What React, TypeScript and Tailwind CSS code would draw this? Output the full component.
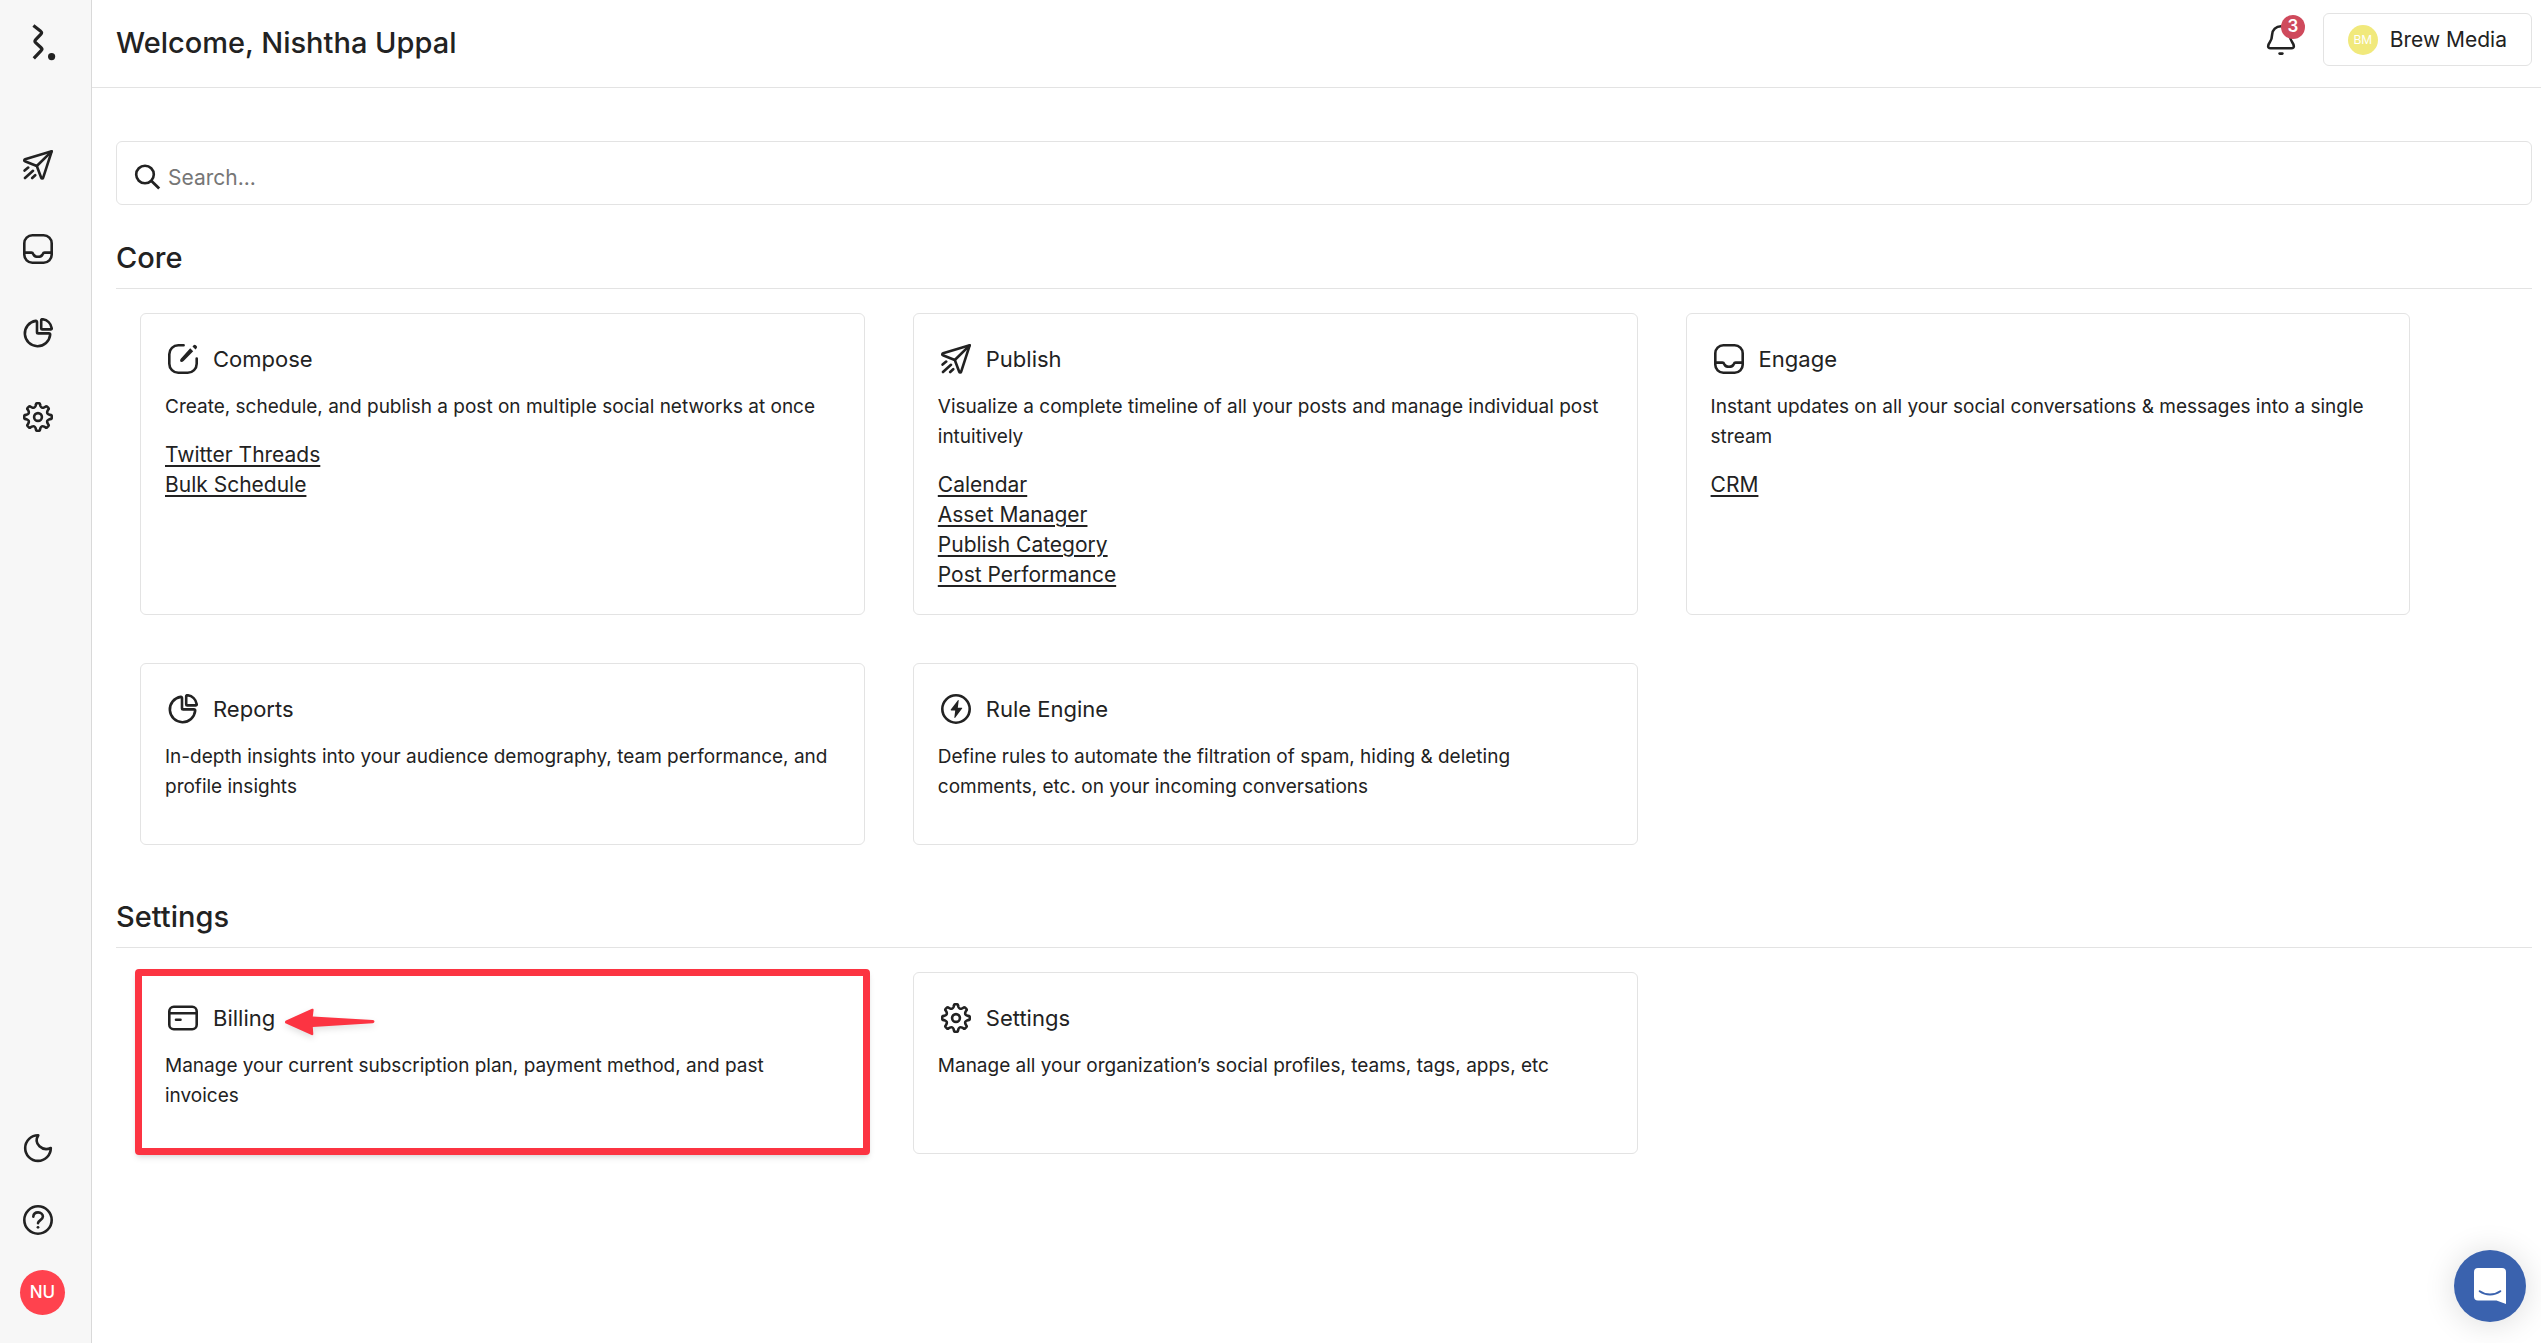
import type { ReactNode } from "react";

type IconProps = { children: ReactNode };

function Icon({ children }: IconProps) {
  return (
    <svg
      viewBox="0 0 30 30"
      className="size-[30px] shrink-0"
      fill="none"
      stroke="currentColor"
      strokeWidth="2.6"
      strokeLinecap="round"
      strokeLinejoin="round"
      aria-hidden="true"
    >
      {children}
    </svg>
  );
}

const PlaneIcon = () => (
  <Icon>
    <path d="M28.7 1.3 2.1 9.300c-1 .3-1.100 1.400-.2 1.900L13.8 16l4.400 11.800c.4 1 1.600 1 1.900 0Z" />
    <path d="M28.400 1.600 13.800 16" />
    <path d="m1.600 20.600 3.600-3M2 28l8-7.200M9.200 28l3-2.800" />
  </Icon>
);

const InboxIcon = () => (
  <Icon>
    <rect x="1.300" y="1.300" width="27.400" height="27.400" rx="8" />
    <path d="M1.600 18.600h6.800c1.100 0 1.600.8 2 1.700.8 1.600 2.300 2.500 4.600 2.500s3.800-.9 4.600-2.500c.4-.9.900-1.700 2-1.700h6.800" />
  </Icon>
);

const PieIcon = () => (
  <Icon>
    <path d="M12.800 2.900A12.700 12.700 0 1 0 27.200 16.700c0-.8-.5-1.300-1.300-1.300H15.200c-.8 0-1.200-.4-1.200-1.200V4c0-.7-.5-1.200-1.200-1.100Z" />
    <path d="M18.200 2.200c0-.7.500-1.100 1.200-1 4.900.6 8.600 4.200 9.300 9 .1.700-.4 1.200-1 1.200h-8.500c-.6 0-1-.4-1-1Z" />
  </Icon>
);

function gearPath() {
  const at = (radius: number, degrees: number) => {
    const t = (degrees * Math.PI) / 180;
    return `${(15 + radius * Math.cos(t)).toFixed(2)} ${(15 + radius * Math.sin(t)).toFixed(2)}`;
  };
  let d = `M${at(11.4, -12)}`;
  for (let i = 0; i < 8; i++) {
    const a = i * 45;
    d += `L${at(12.6, a - 9.5)}Q${at(13.8, a - 8.5)} ${at(13.8, a - 4)}L${at(13.8, a + 4)}Q${at(13.8, a + 8.5)} ${at(12.6, a + 9.5)}`;
    d += `L${at(11.4, a + 12)}Q${at(9, a + 22.5)} ${at(11.4, a + 33)}`;
  }
  return `${d}Z`;
}

const GearIcon = () => (
  <Icon>
    <path d={gearPath()} />
    <circle cx="15" cy="15" r="3.9" />
  </Icon>
);

const ComposeIcon = () => (
  <Icon>
    <path d="M15.600 1.300H10.300a9 9 0 0 0-9 9v9.400a9 9 0 0 0 9 9h9.400a9 9 0 0 0 9-9v-5.200" />
    <path
      d="m22.200 4.300 3 3L15.600 17c-.6.600-1.300.9-2.200.9-.8 0-1.300-.5-1.300-1.200 0-.9.3-1.700.9-2.300ZM25.600 1.300a1.600 1.600 0 0 1 2.200 0l.8.8a1.600 1.600 0 0 1 0 2.200l-1.100 1.100-3-3Z"
      fill="currentColor"
      stroke="none"
    />
  </Icon>
);

const BoltIcon = () => (
  <Icon>
    <circle cx="15" cy="15" r="13.700" />
    <path
      d="M16.900 6.300 9.800 15.600c-.3.400-.1.800.4.800h4l-.8 6.900c-.1.800.4.900.8.400l6.900-9.200c.3-.4.1-.8-.4-.8h-3.900l.9-7.100c.1-.7-.4-.8-.8-.300Z"
      fill="currentColor"
      stroke="none"
    />
  </Icon>
);

const CardIcon = () => (
  <Icon>
    <rect x="1.300" y="3.800" width="27.400" height="22.400" rx="4.500" />
    <path d="M1.500 10.300h27M8 16.700h4.500" />
  </Icon>
);

const MoonIcon = () => (
  <Icon>
    <path d="M15.300 2.300A12.800 12.800 0 1 0 27.800 15c-8.300 3.800-17.800-4.200-12.500-12.700Z" />
  </Icon>
);

const HelpIcon = () => (
  <Icon>
    <circle cx="15" cy="15" r="13.700" />
    <path d="M10.300 11.700c.2-2.600 2.100-4.300 4.800-4.300 2.800 0 4.800 1.800 4.800 4.200 0 3.400-4.700 3.500-4.900 6.600" />
    <circle cx="15" cy="22.300" r="1.400" fill="currentColor" stroke="none" />
  </Icon>
);

const SearchIcon = () => (
  <Icon>
    <circle cx="11" cy="11.500" r="8.800" />
    <path d="m17.500 18 7.700 7.600" strokeWidth="2.800" strokeLinecap="butt" />
  </Icon>
);

const BellIcon = () => (
  <Icon>
    <path d="M15 1.300c-5 0-8.700 3.500-8.900 8.400-.1 3.300-.3 4.800-2.300 7.600-1.800 2.500-2.800 5.900.7 5.900h21c3.500 0 2.500-3.400.7-5.900-2-2.800-2.200-4.300-2.300-7.600C23.700 4.800 20 1.300 15 1.300Z" />
    <path d="M13.700 28.600h2.600" strokeWidth="2.800" />
  </Icon>
);

const LogoIcon = () => (
  <svg
    viewBox="0 0 30 40"
    className="h-10 w-[30px]"
    fill="none"
    stroke="currentColor"
    strokeWidth="3.200"
    strokeLinejoin="round"
    aria-hidden="true"
  >
    <path d="m4.400 2.600 7 5.500c1.600 1.300 1.600 1.900.3 3.300l-5 5.200c-1.300 1.400-1.300 1.900.2 3.300l5 4.600c1.500 1.400 1.500 1.900.2 3.200l-7.300 7.700" />
    <circle cx="22.600" cy="33.600" r="3.600" fill="currentColor" stroke="none" />
  </svg>
);

type Tile = {
  title: string;
  text: string;
  icon: ReactNode;
  links?: string[];
  marked?: boolean;
};

const core: Tile[] = [
  {
    title: "Compose",
    text: "Create, schedule, and publish a post on multiple social networks at once",
    icon: <ComposeIcon />,
    links: ["Twitter Threads", "Bulk Schedule"],
  },
  {
    title: "Publish",
    text: "Visualize a complete timeline of all your posts and manage individual post intuitively",
    icon: <PlaneIcon />,
    links: ["Calendar", "Asset Manager", "Publish Category", "Post Performance"],
  },
  {
    title: "Engage",
    text: "Instant updates on all your social conversations & messages into a single stream",
    icon: <InboxIcon />,
    links: ["CRM"],
  },
  {
    title: "Reports",
    text: "In-depth insights into your audience demography, team performance, and profile insights",
    icon: <PieIcon />,
  },
  {
    title: "Rule Engine",
    text: "Define rules to automate the filtration of spam, hiding & deleting comments, etc. on your incoming conversations",
    icon: <BoltIcon />,
  },
];

const settings: Tile[] = [
  {
    title: "Billing",
    text: "Manage your current subscription plan, payment method, and past invoices",
    icon: <CardIcon />,
    marked: true,
  },
  {
    title: "Settings",
    text: "Manage all your organization’s social profiles, teams, tags, apps, etc",
    icon: <GearIcon />,
  },
];

/** Red frame and arrow laid over a card to call it out. */
function Callout() {
  return (
    <div className="pointer-events-none" aria-hidden="true">
      <div className="absolute -inset-x-1.5 -top-1 -bottom-0.5 rounded border-[7px] border-[#fc3442] shadow-md" />
      <svg
        viewBox="0 0 90 28"
        className="absolute top-[35px] left-36 h-7 w-[90px] drop-shadow-md"
        fill="#fc3442"
      >
        <path d="M1 12.500 27 .8c1-.4 1.600.1 1.600 1.100l-.8 6.600 60 3.400c2.200.2 2.200 3.200 0 3.300l-60 3.800.5 7c0 1-.8 1.500-1.700 1L1 15.600c-1.400-.8-1.400-2.400 0-3.100Z" />
      </svg>
    </div>
  );
}

function TileCard({ title, text, icon, links = [], marked }: Tile) {
  return (
    <article className="relative m-6 min-h-[182px] w-[30%] rounded-md border border-[#e3e3e3] p-6">
      <div className="flex h-[42px] items-center gap-[15px] pl-[3px]">
        {icon}
        <h3 className="text-[22px]">{title}</h3>
      </div>
      <p className="mt-3 text-[19px] leading-[30px]">{text}</p>
      {links.length > 0 && (
        <ul className="mt-[18px] text-[21px] leading-[30px]">
          {links.map((link) => (
            <li key={link}>
              <a href="#" className="underline decoration-2 underline-offset-3">
                {link}
              </a>
            </li>
          ))}
        </ul>
      )}
      {marked && <Callout />}
    </article>
  );
}

function Section({ title, tiles }: { title: string; tiles: Tile[] }) {
  return (
    <section className="pt-[30px]">
      <h2 className="border-b border-[#e3e3e3] pb-3 text-[29px] leading-9 font-medium">{title}</h2>
      <div className="flex flex-wrap">
        {tiles.map((tile) => (
          <TileCard key={tile.title} {...tile} />
        ))}
      </div>
    </section>
  );
}

const nav = [
  { label: "Publish", icon: <PlaneIcon /> },
  { label: "Engage", icon: <InboxIcon /> },
  { label: "Reports", icon: <PieIcon /> },
  { label: "Settings", icon: <GearIcon /> },
];

export default function App() {
  return (
    <div className="flex min-h-screen bg-white font-['Inter',sans-serif] text-[#222222]">
      <aside className="sticky top-0 flex h-screen w-[92px] shrink-0 flex-col border-r border-[#d9d9d9] bg-[#f7f7f7] pb-7 pl-[23px]">
        <a href="#" aria-label="Home" className="mt-[23px] ml-1.5">
          <LogoIcon />
        </a>
        <nav className="mt-[87px] flex flex-col items-start gap-[54px]">
          {nav.map((item) => (
            <a key={item.label} href="#" aria-label={item.label}>
              {item.icon}
            </a>
          ))}
        </nav>
        <div className="mt-auto flex flex-col items-start gap-[42px]">
          <button type="button" aria-label="Dark mode">
            <MoonIcon />
          </button>
          <button type="button" aria-label="Help">
            <HelpIcon />
          </button>
          <button
            type="button"
            className="-mt-[7px] -ml-[3px] flex size-[45px] items-center justify-center rounded-full bg-[#ff424e] text-[17px] font-medium text-white"
          >
            NU
          </button>
        </div>
      </aside>

      <div className="min-w-0 flex-1">
        <header className="flex h-[88px] items-start justify-between border-b border-[#e3e3e3] pr-[9px] pl-6">
          <h1 className="mt-[25px] text-[29px] leading-9 font-medium">Welcome, Nishtha Uppal</h1>
          <div className="mt-[13px] flex items-center gap-[27px]">
            <button type="button" aria-label="Notifications" className="relative">
              <BellIcon />
              <span className="absolute -top-2.5 left-[15px] flex size-6 items-center justify-center rounded-full bg-[#cf4a5c] text-[17px] font-semibold text-white">
                3
              </span>
            </button>
            <button
              type="button"
              className="flex h-[53px] items-center gap-3 rounded-md border border-[#e3e3e3] px-6 text-[21px]"
            >
              <span className="flex size-[30px] items-center justify-center rounded-full bg-[#f1e97c] text-[12px] text-white">
                BM
              </span>
              Brew Media
            </button>
          </div>
        </header>

        <main className="pt-[53px] pr-[9px] pl-6">
          <label className="mb-[5px] flex h-16 items-center gap-1 rounded-md border border-[#e3e3e3] pt-2.5 pl-[17px]">
            <SearchIcon />
            <input
              type="search"
              aria-label="Search"
              placeholder="Search..."
              className="w-full bg-transparent text-[21px] outline-none placeholder:text-[#767676]"
            />
          </label>
          <Section title="Core" tiles={core} />
          <Section title="Settings" tiles={settings} />
        </main>
      </div>

      <button
        type="button"
        aria-label="Open chat"
        className="fixed right-[15px] bottom-[21px] flex size-[72px] items-center justify-center rounded-full bg-[#3a62ae] shadow-[0_2px_32px_rgba(0,0,0,0.14)]"
      >
        <svg viewBox="0 0 32 36" className="h-9 w-8" aria-hidden="true">
          <path
            d="M4 0h24a4 4 0 0 1 4 4v32l-9.500-3.500H4a4 4 0 0 1-4-4V4a4 4 0 0 1 4-4Z"
            fill="#fff"
          />
          <path
            d="M5.700 23.200c6 4.400 14.600 4.400 20.600 0"
            fill="none"
            stroke="#3a62ae"
            strokeWidth="2"
            strokeLinecap="round"
          />
        </svg>
      </button>
    </div>
  );
}
